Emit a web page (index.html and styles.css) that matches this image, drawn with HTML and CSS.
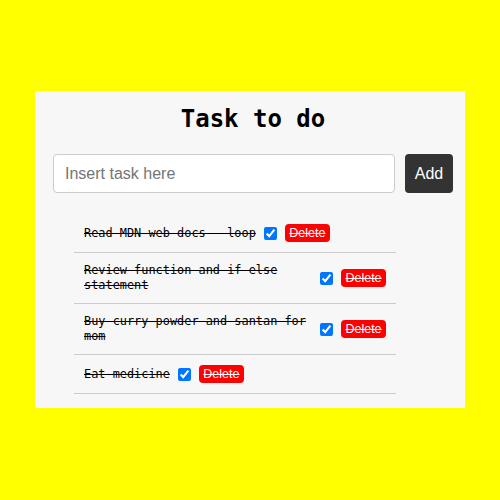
FILE: index.html
```html
<!DOCTYPE html>
<html>
<head>
<meta charset="utf-8">
<link rel="stylesheet" href="styles.css">
</head>
<body>
<div class="card">
  <h2 class="title">Task to do</h2>
  <div class="add-row">
    <input class="task-input" type="text" placeholder="Insert task here">
    <button class="add-btn">Add</button>
  </div>
  <ul class="list">
    <li class="item"><span class="item-text">Read MDN web docs - loop</span><input class="check" type="checkbox" checked><button class="del">Delete</button></li>
    <li class="item"><span class="item-text">Review function and if else statement</span><input class="check" type="checkbox" checked><button class="del">Delete</button></li>
    <li class="item"><span class="item-text">Buy curry powder and santan for mom</span><input class="check" type="checkbox" checked><button class="del">Delete</button></li>
    <li class="item"><span class="item-text">Eat medicine</span><input class="check" type="checkbox" checked><button class="del">Delete</button></li>
  </ul>
</div>
</body>
</html>
```

FILE: styles.css
```css
html, body {
  margin: 0;
  padding: 0;
  background: #ffff00;
  height: 100%;
}
body {
  display: flex;
  justify-content: center;
  padding-top: 91px;
  box-sizing: border-box;
}
.card {
  width: 430px;
  height: 317px;
  background: #f7f7f7;
  box-sizing: border-box;
  padding-top: 14px;
}
.title {
  margin: 0;
  text-align: center;
  font-family: "DejaVu Sans Mono", monospace;
  font-weight: bold;
  font-size: 24px;
  line-height: 28px;
  color: #000;
  padding-left: 6px;
}
.add-row {
  display: flex;
  margin: 21px 0 0 18px;
  gap: 10px;
}
.task-input {
  width: 342px;
  height: 39px;
  box-sizing: border-box;
  border: 1px solid #cccccc;
  border-radius: 4px;
  padding: 0 11px;
  font-family: "Liberation Sans", Arial, sans-serif;
  font-size: 16px;
  background: #fff;
  outline: none;
}
.task-input::placeholder {
  color: #757575;
}
.add-btn {
  width: 48px;
  height: 39px;
  border: none;
  border-radius: 4px;
  background: #333333;
  color: #fff;
  font-family: "Liberation Sans", Arial, sans-serif;
  font-size: 16px;
  padding: 0;
}
.list {
  list-style: none;
  margin: 21px 0 0 39px;
  padding: 0;
  width: 322px;
}
.item {
  display: flex;
  align-items: center;
  gap: 8px;
  padding: 10px;
  border-bottom: 1px solid #cccccc;
  font-family: "DejaVu Sans Mono", monospace;
  font-size: 11.9px;
  line-height: 15px;
  color: #000;
}
.item-text {
  text-decoration: line-through;
}
.check {
  margin: 0;
  width: 13px;
  height: 13px;
  flex: none;
}
.del {
  flex: none;
  width: 45px;
  height: 18px;
  padding: 0;
  border: none;
  border-radius: 4px;
  background: #ff0000;
  color: #fff;
  font-family: "Liberation Sans", Arial, sans-serif;
  font-size: 12.5px;
  text-decoration: line-through;
}
```
